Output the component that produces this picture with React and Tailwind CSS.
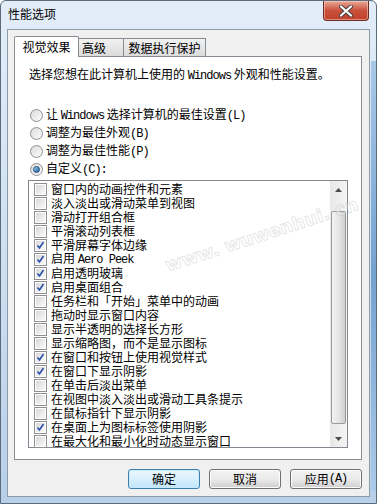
import React from 'react';

const options = [
  { label: ['让 ', 'Windows', ' 选择计算机的最佳设置', '(L)'], checked: false },
  { label: ['调整为最佳外观', '(B)'], checked: false },
  { label: ['调整为最佳性能', '(P)'], checked: false },
  { label: ['自定义', '(C):'], checked: true },
];

const effects = [
  ['窗口内的动画控件和元素', false],
  ['淡入淡出或滑动菜单到视图', false],
  ['滑动打开组合框', false],
  ['平滑滚动列表框', false],
  ['平滑屏幕字体边缘', true],
  ['启用 Aero Peek', true],
  ['启用透明玻璃', true],
  ['启用桌面组合', true],
  ['任务栏和「开始」菜单中的动画', false],
  ['拖动时显示窗口内容', false],
  ['显示半透明的选择长方形', false],
  ['显示缩略图，而不是显示图标', false],
  ['在窗口和按钮上使用视觉样式', true],
  ['在窗口下显示阴影', true],
  ['在单击后淡出菜单', false],
  ['在视图中淡入淡出或滑动工具条提示', false],
  ['在鼠标指针下显示阴影', false],
  ['在桌面上为图标标签使用阴影', true],
  ['在最大化和最小化时动态显示窗口', false],
];

const cjk = "font-['Noto_Sans_CJK_SC',sans-serif]";
const mono = "font-['Liberation_Mono',monospace] tracking-[-1px]";

// latin bits in SimSun look like a narrow mono
const Mixed = ({ parts }) => (
  <>
    {parts.map((p, i) =>
      /^[\x20-\x7e]+$/.test(p) && p.trim() ? (
        <span key={i} className={mono}>{p}</span>
      ) : (
        <span key={i} className="whitespace-pre">{p}</span>
      )
    )}
  </>
);

const splitLatin = (s) => s.split(/([A-Za-z]+(?: [A-Za-z]+)*)/).filter(Boolean);

const Radio = ({ checked }) => (
  <span className="flex h-[13px] w-[13px] shrink-0 items-center justify-center rounded-full border border-[#8f8f8f] bg-gradient-to-br from-[#dcdcdc] to-[#fbfbfb]">
    {checked && (
      <span className="h-[7px] w-[7px] rounded-full border border-[#1a4a78] bg-gradient-to-br from-[#9fd3f5] to-[#1c5b96]" />
    )}
  </span>
);

const Check = ({ checked }) => (
  <span className="flex h-[13px] w-[13px] shrink-0 items-center justify-center border border-[#8f8f8f] bg-white">
    <span className="flex h-[9px] w-[9px] items-center justify-center bg-gradient-to-br from-[#d8d8d8] to-[#fafafa]">
      {checked && (
        <svg width="9" height="9" viewBox="0 0 9 9">
          <path d="M1.5 4.5 L3.5 7 L7.5 1" fill="none" stroke="#2a4fa8" strokeWidth="1.6" />
        </svg>
      )}
    </span>
  </span>
);

const Button = ({ children, primary }) => (
  <button
    className={
      'flex h-[20px] w-[72px] items-center justify-center rounded-[3px] border text-[12px] leading-none text-black ' +
      (primary
        ? 'border-[#3c7fb1] bg-gradient-to-b from-[#eaf6fd] via-[#d9f0fc] to-[#bee6fd] shadow-[inset_0_0_0_1px_#cdeafb]'
        : 'border-[#707070] bg-gradient-to-b from-[#f2f2f2] via-[#ebebeb] to-[#cfcfcf] shadow-[inset_0_0_0_1px_#fcfcfc]')
    }
  >
    {children}
  </button>
);

export default function App() {
  return (
    <div className={`relative flex h-[504px] w-[377px] flex-col overflow-hidden rounded-t-[6px] border border-[#5a6b7d] bg-gradient-to-b from-[#e2edf8] via-[#cfe0f1] to-[#b7cfe8] ${cjk}`}>
      {/* title bar */}
      <div className="flex h-[28px] shrink-0 items-start">
        <div className="pl-[7px] pt-[6px] text-[12px] leading-[14px] text-black">性能选项</div>
        <div className="ml-auto mr-[7px] flex h-[20px] w-[46px] items-center justify-center rounded-b-[4px] border border-t-0 border-[#6d2a22] bg-gradient-to-b from-[#e7a898] via-[#c9503a] to-[#c0412b] shadow-[inset_0_0_0_1px_rgba(255,220,210,0.5)]">
          <svg width="14" height="12" viewBox="0 0 14 12">
            <path d="M2 1.5 L12 10.5 M12 1.5 L2 10.5" stroke="#3f3f3f" strokeWidth="4" strokeLinecap="round" />
            <path d="M2 1.5 L12 10.5 M12 1.5 L2 10.5" stroke="#ffffff" strokeWidth="2.2" strokeLinecap="round" />
          </svg>
        </div>
      </div>

      <div className="flex flex-1 pb-[6px] pl-[6px] pr-[6px]">
        <div className="flex flex-1 flex-col border border-[#8d9aa8] bg-[#f0f0f0]">
          {/* tabs */}
          <div className="flex items-end pl-[6px] pt-[6px] text-[12px] leading-[14px]">
            <div className="relative z-10 -mb-px flex h-[21px] w-[65px] items-center justify-center rounded-t-[2px] border border-b-0 border-[#898c95] bg-white">
              视觉效果
            </div>
            <div className="flex h-[18px] w-[45px] items-center border border-b-0 border-l-0 border-[#898c95] bg-gradient-to-b from-[#f2f2f2] to-[#dbdbdb] pl-[3px]">
              高级
            </div>
            <div className="flex h-[18px] w-[82px] items-center justify-center border border-b-0 border-l-0 border-[#898c95] bg-gradient-to-b from-[#f2f2f2] to-[#dbdbdb]">
              数据执行保护
            </div>
          </div>

          {/* page */}
          <div className="ml-[6px] flex h-[404px] w-[348px] flex-col border border-[#898c95] bg-white px-[13px] pt-[10px] text-[12px] leading-[14px] text-black">
            <div className="pl-[1px]">
              <Mixed parts={['选择您想在此计算机上使用的 ', 'Windows', ' 外观和性能设置。']} />
            </div>

            <div className="mt-[23px] flex flex-col">
              {options.map((o, i) => (
                <div key={i} className="flex h-[18px] items-center gap-[3px] pl-[2px]">
                  <Radio checked={o.checked} />
                  <span className="whitespace-nowrap">
                    <Mixed parts={o.label} />
                  </span>
                </div>
              ))}
            </div>

            <div className="mt-[2px] flex h-[268px] border border-[#828790] bg-white">
              <div className="flex flex-1 flex-col pt-[1px]">
                {effects.map(([t, c], i) => (
                  <div key={i} className="flex h-[14px] items-center gap-[4px] pl-[5px]">
                    <Check checked={c} />
                    <span className="whitespace-nowrap">
                      <Mixed parts={splitLatin(t)} />
                    </span>
                  </div>
                ))}
              </div>
              {/* scrollbar */}
              <div className="flex w-[17px] flex-col bg-gradient-to-r from-[#e8e8e8] to-[#f4f4f4]">
                <div className="flex h-[17px] items-center justify-center">
                  <svg width="7" height="4" viewBox="0 0 7 4"><path d="M0 4 L3.5 0 L7 4 Z" fill="#4d4d4d" /></svg>
                </div>
                <div className="mx-[1px] mb-[6px] mt-[13px] flex-1 rounded-[2px] border border-[#9b9b9b] bg-gradient-to-r from-[#f3f3f3] via-[#e6e6e6] to-[#cfcfcf]" />
                <div className="flex h-[17px] items-center justify-center">
                  <svg width="7" height="4" viewBox="0 0 7 4"><path d="M0 0 L7 0 L3.5 4 Z" fill="#4d4d4d" /></svg>
                </div>
              </div>
            </div>
          </div>

          {/* buttons */}
          <div className="mt-[9px] flex gap-[9px] pl-[120px]">
            <Button primary>确定</Button>
            <Button>取消</Button>
            <Button>
              <Mixed parts={['应用', '(A)']} />
            </Button>
          </div>
        </div>
      </div>

      {/* glass streak on right frame edge */}
      <div className="pointer-events-none absolute right-0 top-[60px] h-[430px] w-[5px] bg-gradient-to-b from-[#9cc0e4] via-[#5e93c8] to-[#a9c8e8] opacity-80" />

      {/* watermark */}
      <div className="pointer-events-none absolute left-[165px] top-[254px] origin-left -rotate-[18deg] whitespace-nowrap font-['DejaVu_Sans',sans-serif] text-[18px] font-bold leading-[22px] text-[rgba(255,255,255,0.3)] [-webkit-text-stroke:1px_rgba(170,170,170,0.3)]">
        www. wuwenhui. cn
      </div>
    </div>
  );
}
